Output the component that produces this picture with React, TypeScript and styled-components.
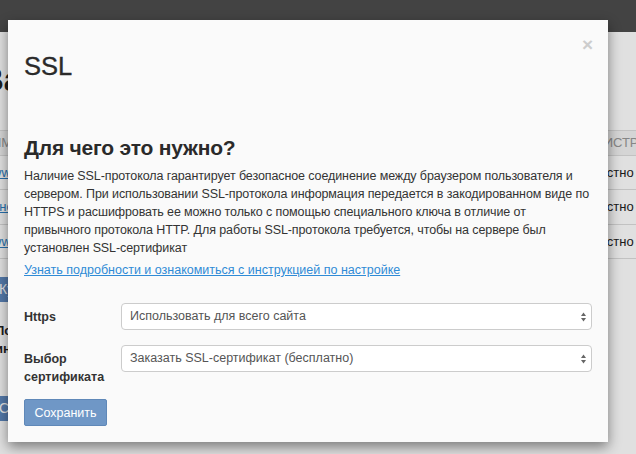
import React from "react";
import styled, { createGlobalStyle } from "styled-components";

const Global = createGlobalStyle`
  html, body { margin: 0; padding: 0; }
  body {
    font-family: "Liberation Sans", Arial, sans-serif;
    background: #fff;
    width: 636px;
    height: 454px;
    overflow: hidden;
  }
`;

const Screen = styled.div`
  position: relative;
  width: 636px;
  height: 454px;
  overflow: hidden;
  background: #fff;
`;

const TopBar = styled.div`
  height: 32px;
  background: #4d4d4d;
`;

const PageBody = styled.div`
  margin-left: -16px;
  width: 720px;
  color: #222;
`;

const PageTitle = styled.h1`
  margin: 28px 0 0 -4px;
  font-size: 33px;
  font-weight: 700;
  line-height: 40px;
`;

const Table = styled.div`
  margin-top: 30px;
  display: grid;
  grid-template-columns: 571px 1fr;
`;

const HeadCell = styled.div<{ $indent?: number }>`
  height: 24px;
  line-height: 24px;
  padding: 0 8px;
  text-indent: ${(p) => p.$indent ?? 0}px;
  background: #f3f3f3;
  border-top: 1px solid #ddd;
  border-bottom: 1px solid #ddd;
  font-size: 13px;
  color: #999;
  text-transform: uppercase;
  white-space: nowrap;
`;

const Cell = styled.div<{ $h: number }>`
  height: ${(p) => p.$h}px;
  line-height: ${(p) => p.$h}px;
  padding: 0 8px;
  border-bottom: 1px solid #ddd;
  font-size: 13px;
  white-space: nowrap;
`;

const RowLink = styled.a`
  color: #2d7fc4;
  text-decoration: underline;
`;

const PageButton = styled.div<{ $top: number }>`
  display: inline-block;
  margin: ${(p) => p.$top}px 0 0 7px;
  height: 25px;
  line-height: 25px;
  padding: 0 8px;
  background: #5f89c0;
  color: #fff;
  font-size: 14px;
  border-radius: 2px;
`;

const PageText = styled.p`
  margin: 20px 0 0 11px;
  font-size: 13px;
  font-weight: 700;
  line-height: 18px;
  width: 200px;
`;

const Backdrop = styled.div`
  position: absolute;
  inset: 0;
  background: rgba(0, 0, 0, 0.12);
`;

const Modal = styled.div`
  position: absolute;
  left: 8px;
  top: 20px;
  width: 600px;
  box-sizing: border-box;
  padding: 32px 16px 16px;
  background: #fafafa;
  color: #333;
  box-shadow: 0 5px 12px rgba(0, 0, 0, 0.45);
`;

const Close = styled.span`
  position: absolute;
  top: 15px;
  right: 15px;
  font-size: 19px;
  font-weight: 700;
  line-height: 20px;
  color: #cdcdcd;
  cursor: pointer;
`;

const Title = styled.h3`
  margin: 0;
  font-size: 25.5px;
  font-weight: 500;
  line-height: 29px;
  color: #2a2a2a;
  -webkit-text-stroke: 0.35px #2a2a2a;
`;

const Heading = styled.h4`
  margin: 55px 0 7px;
  font-size: 21px;
  font-weight: 700;
  line-height: 24px;
  letter-spacing: -0.2px;
  color: #2a2a2a;
`;

const Text = styled.p`
  margin: 0 0 4px;
  font-size: 12.5px;
  line-height: 18px;
  letter-spacing: -0.1px;
`;

const Link = styled.a`
  display: block;
  font-size: 12.5px;
  line-height: 18px;
  color: #2f8bd6;
  text-decoration: underline;
`;

const Form = styled.div`
  margin-top: 24px;
  display: grid;
  grid-template-columns: 97px 1fr;
  row-gap: 15px;
  align-items: start;
`;

const Label = styled.label`
  padding-top: 5px;
  font-size: 12.5px;
  font-weight: 700;
  line-height: 18px;
  color: #333;
`;

const SelectBox = styled.div`
  position: relative;
  height: 27px;
  box-sizing: border-box;
  border: 1px solid #ccc;
  border-radius: 4px;
  background: #fff;
  padding-left: 8px;
  font-size: 12.5px;
  line-height: 25px;
  color: #555;
`;

const Arrows = styled.svg`
  position: absolute;
  right: 4px;
  top: 8px;
`;

const SaveButton = styled.button`
  margin-top: 13px;
  width: 83px;
  height: 27px;
  border: 1px solid #5f88b8;
  border-radius: 2px;
  background: #6f97c6;
  color: #fff;
  font-family: "Liberation Sans", Arial, sans-serif;
  font-size: 12.5px;
  padding: 0;
`;

const Select = ({ value }: { value: string }) => (
  <SelectBox>
    {value}
    <Arrows width="7" height="10" viewBox="0 0 7 10">
      <path d="M3.5 0.5 L6 4 L1 4 Z" fill="#666" />
      <path d="M3.5 9.5 L6 6 L1 6 Z" fill="#666" />
    </Arrows>
  </SelectBox>
);

export default function App() {
  return (
    <Screen>
      <Global />
      <TopBar />
      <PageBody>
        <PageTitle>Ваши сайты</PageTitle>
        <Table>
          <HeadCell>ИМЯ</HeadCell>
          <HeadCell $indent={-20}>ДАТА РЕГИСТРАЦИИ</HeadCell>
          <Cell $h={33}>
            <RowLink>www.domain.ru</RowLink>
          </Cell>
          <Cell $h={33}>Неизвестно</Cell>
          <Cell $h={34}>
            <RowLink>инсталл.рф</RowLink>
          </Cell>
          <Cell $h={34}>Неизвестно</Cell>
          <Cell $h={33}>
            <RowLink>www.site.ru</RowLink>
          </Cell>
          <Cell $h={33}>Неизвестно</Cell>
        </Table>
        <PageButton $top={18}>Купить</PageButton>
        <PageText>Подключение услуги инструмента</PageText>
        <PageButton $top={38}>Сохранить</PageButton>
      </PageBody>
      <Backdrop />
      <Modal>
        <Close>×</Close>
        <Title>SSL</Title>
        <Heading>Для чего это нужно?</Heading>
        <Text>
          Наличие SSL-протокола гарантирует безопасное соединение между браузером пользователя и
          <br />
          сервером. При использовании SSL-протокола информация передается в закодированном виде по
          <br />
          HTTPS и расшифровать ее можно только с помощью специального ключа в отличие от
          <br />
          привычного протокола HTTP. Для работы SSL-протокола требуется, чтобы на сервере был
          <br />
          установлен SSL-сертификат
        </Text>
        <Link>Узнать подробности и ознакомиться с инструкцией по настройке</Link>
        <Form>
          <Label>Https</Label>
          <Select value="Использовать для всего сайта" />
          <Label>Выбор сертификата</Label>
          <Select value="Заказать SSL-сертификат (бесплатно)" />
        </Form>
        <SaveButton>Сохранить</SaveButton>
      </Modal>
    </Screen>
  );
}
